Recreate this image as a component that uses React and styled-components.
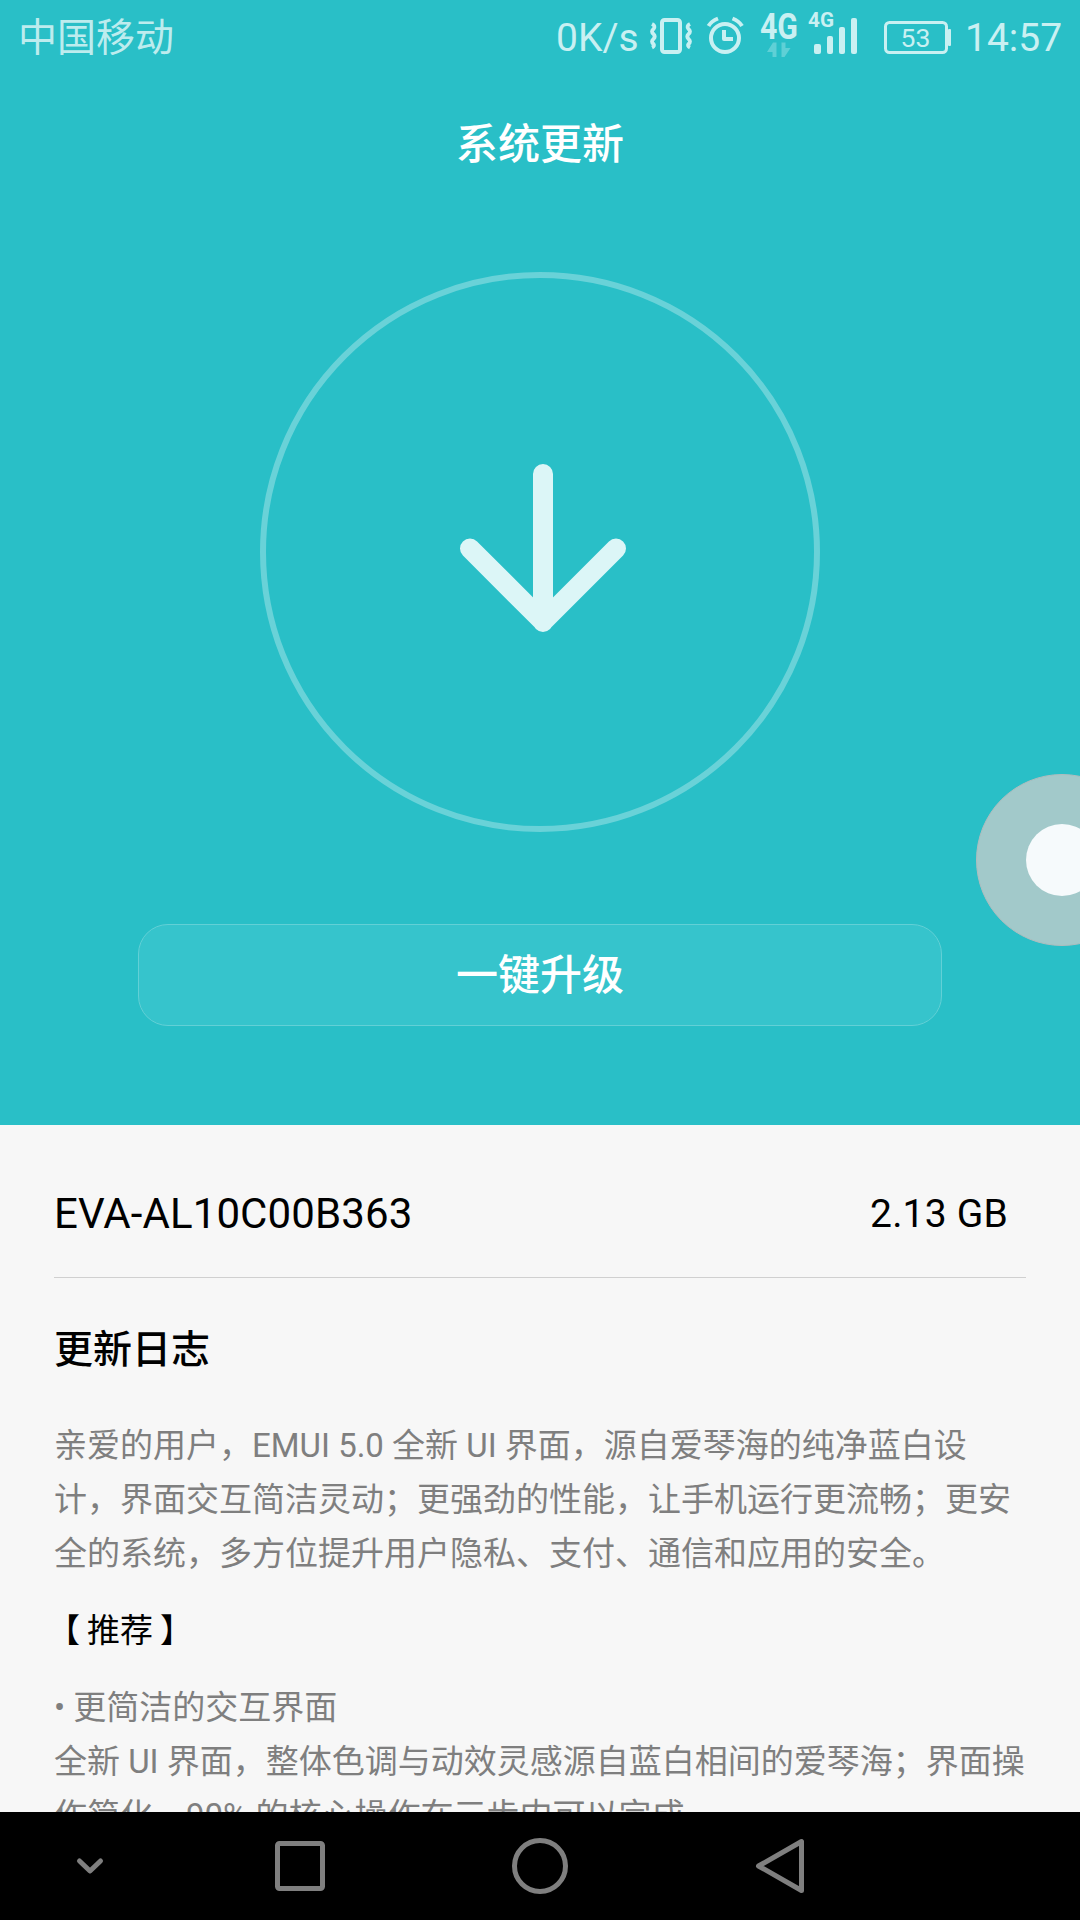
import React from 'react'
import styled, { createGlobalStyle } from 'styled-components'

const GlobalStyle = createGlobalStyle`
  * {
    box-sizing: border-box;
  }

  body {
    margin: 0;
    background: #000;
    font-family: Roboto, "Noto Sans CJK SC", sans-serif;
  }
`

const Screen = styled.div`
  position: relative;
  display: flex;
  flex-direction: column;
  width: 1080px;
  height: 1920px;
  overflow: hidden;
`

const Hero = styled.section`
  display: flex;
  flex-direction: column;
  align-items: center;
  height: 1125px;
  flex: none;
  background: #29bfc7;
`

const StatusBar = styled.header`
  display: flex;
  align-items: center;
  justify-content: space-between;
  width: 100%;
  height: 73px;
  padding: 0 18px;
  color: #c9f0f2;
`

const Carrier = styled.span`
  margin-top: 4px;
  font-size: 39px;
  line-height: 73px;
  color: #bdecee;
`

const StatusItems = styled.div`
  display: flex;
  align-items: center;
  height: 73px;
`

const StatusText = styled.span`
  width: ${props => props.$width}px;
  margin-top: 3px;
  font-size: 39px;
  line-height: 46px;
  white-space: nowrap;
`

const StatusIcons = styled.svg`
  display: block;
  width: 315px;
  height: 73px;
`

const Title = styled.h1`
  margin: 42px 0 0;
  font-size: 42px;
  font-weight: 500;
  line-height: 60px;
  color: #fff;
`

const Progress = styled.div`
  display: flex;
  align-items: center;
  justify-content: center;
  width: 560px;
  height: 560px;
  margin-top: 97px;
  border: 6px solid #69d2d8;
  border-radius: 50%;
`

const UpgradeButton = styled.button`
  width: 804px;
  height: 102px;
  margin-top: 92px;
  padding: 0 0 7px;
  border: 1px solid #62d0d6;
  border-radius: 30px;
  background: #36c4cc;
  color: #fff;
  font-family: inherit;
  font-size: 42px;
  font-weight: 500;
`

const Details = styled.main`
  flex: 1;
  min-height: 0;
  padding: 0 54px;
  overflow: hidden;
  background: #f7f7f7;
`

const VersionRow = styled.div`
  display: flex;
  align-items: center;
  justify-content: space-between;
  height: 153px;
  padding: 25px 18px 0 0;
  border-bottom: 1px solid #d0d0d0;
  color: #000;
`

const Version = styled.span`
  font-size: 42px;
  letter-spacing: 0.1px;
`

const Size = styled.span`
  font-size: 39px;
  letter-spacing: 0.2px;
`

const LogTitle = styled.h2`
  margin: 43px 0 0;
  font-size: 39px;
  font-weight: 500;
  line-height: 58px;
`

const Paragraph = styled.p`
  margin: ${props => props.$top}px -20px 0 0;
  font-size: 33px;
  line-height: 54px;
  color: ${props => (props.$dark ? '#000' : '#7f7f7f')};
  white-space: nowrap;
`

const Recommended = styled.span`
  margin: 0 7px;
`

const Heading = styled(Paragraph)`
  text-indent: -7px;
`

const NavBar = styled.nav`
  flex: none;
  height: 108px;
  background: #000;
`

const TouchBall = styled.div`
  position: absolute;
  top: 774px;
  left: 976px;
  display: flex;
  align-items: center;
  justify-content: center;
  width: 172px;
  height: 172px;
  border: 1px solid #afbdbe;
  border-radius: 50%;
  background: #a2c9ca;
`

const TouchDot = styled.div`
  width: 72px;
  height: 72px;
  border-radius: 50%;
  background: #f6fafc;
`

// vibrate, alarm, mobile data, signal and battery
const Indicators = () => (
  <StatusIcons viewBox="650 0 315 73" fill="none" stroke="#c9f0f2">
    <rect x="662" y="20" width="18" height="32" rx="2.5" strokeWidth="4" />
    <path d="M652 24q4 2 1.500 5-3 2.500 0 5 2.500 2.500 0 5-3 2.500 0 5 1.500 2-1.500 3.500M690 24q-4 2-1.500 5 3 2.500 0 5-2.500 2.500 0 5 3 2.500 0 5-1.500 2 1.500 3.500" strokeWidth="3.800" />
    <circle cx="725" cy="38" r="14" strokeWidth="4" />
    <path d="M724 30v9h9" strokeWidth="4" strokeLinejoin="round" />
    <path d="M708.500 26q3-5 9.500-7.500M742 26q-3-5-9.500-7.500" strokeWidth="4" />
    <g fill="#c9f0f2" stroke="none" fontFamily="Roboto" fontWeight="700">
      <text x="760" y="38.500" fontSize="36" textLength="38" lengthAdjust="spacingAndGlyphs">4G</text>
      <text x="808" y="27" fontSize="20.500" textLength="26" lengthAdjust="spacingAndGlyphs">4G</text>
      <rect x="814" y="44" width="7" height="10" rx="2" />
      <rect x="827" y="36" width="6" height="18" rx="2" />
      <rect x="839" y="27" width="6" height="27" rx="2" />
      <rect x="851" y="18" width="6" height="36" rx="2" />
      <rect x="948" y="29" width="3" height="17" rx="1" />
    </g>
    <path d="M776.500 42.500v14.500h-4v-5h-5.500l6-9.500zM781.500 42.500v14.500h3l6-9h-5v-5.500z" fill="#5fd0d6" stroke="none" />
    <rect x="885.500" y="22.500" width="61" height="30" rx="4" strokeWidth="3" />
    <text x="900.500" y="47" fill="#c9f0f2" stroke="none" fontFamily="Roboto" fontSize="26.500">53</text>
  </StatusIcons>
)

const DownArrow = () => (
  <svg width="180" height="180" viewBox="450 462 180 180" fill="none">
    <path d="M543 474V622M470 548.500L543 621.500L616 548.500" stroke="#dcf6f7" strokeWidth="20" strokeLinecap="round" strokeLinejoin="round" />
  </svg>
)

const NavIcons = () => (
  <svg width="1080" height="108" viewBox="0 1812 1080 108" fill="none" stroke="#7f7f7f" strokeWidth="5">
    <path d="M79.500 1861l10.500 10 10.500-10" strokeLinecap="round" strokeLinejoin="round" />
    <rect x="277.500" y="1843.500" width="45" height="45" rx="2" />
    <circle cx="540" cy="1866" r="25.500" />
    <path d="M801.500 1841.500v49L758.500 1866z" strokeLinejoin="round" />
  </svg>
)

export default function App() {
  return (
    <>
      <GlobalStyle />
      <Screen>
        <Hero>
          <StatusBar>
            <Carrier>中国移动</Carrier>
            <StatusItems>
              <StatusText $width={94}>0K/s</StatusText>
              <Indicators />
              <StatusText $width={97}>14:57</StatusText>
            </StatusItems>
          </StatusBar>
          <Title>系统更新</Title>
          <Progress>
            <DownArrow />
          </Progress>
          <UpgradeButton>一键升级</UpgradeButton>
        </Hero>
        <Details>
          <VersionRow>
            <Version>EVA-AL10C00B363</Version>
            <Size>2.13 GB</Size>
          </VersionRow>
          <LogTitle>更新日志</LogTitle>
          <Paragraph $top={40}>
            亲爱的用户，EMUI 5.0 全新 UI 界面，源自爱琴海的纯净蓝白设<br />
            计，界面交互简洁灵动；更强劲的性能，让手机运行更流畅；更安<br />
            全的系统，多方位提升用户隐私、支付、通信和应用的安全。
          </Paragraph>
          <Heading $top={23} $dark>
            【<Recommended>推荐</Recommended>】
          </Heading>
          <Paragraph $top={23}>
            • 更简洁的交互界面<br />
            全新 UI 界面，整体色调与动效灵感源自蓝白相间的爱琴海；界面操<br />
            作简化，90% 的核心操作在三步内可以完成。
          </Paragraph>
        </Details>
        <NavBar>
          <NavIcons />
        </NavBar>
        <TouchBall>
          <TouchDot />
        </TouchBall>
      </Screen>
    </>
  )
}
